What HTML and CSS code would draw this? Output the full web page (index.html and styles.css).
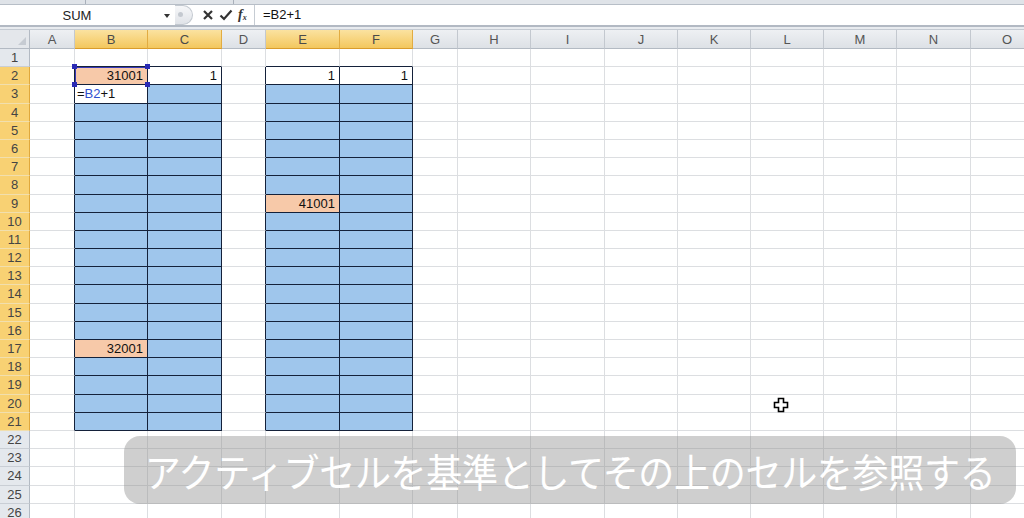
FILE: index.html
```html
<!DOCTYPE html>
<html lang="ja">
<head>
<meta charset="utf-8">
<title>Excel</title>
<link rel="stylesheet" href="styles.css">
</head>
<body>
<div class="app">
  <div class="topstrip"><span class="tdiv d1"></span><span class="tdiv d2"></span></div>
  <div class="fbar">
    <div class="namebox"><span class="name">SUM</span><span class="dd"></span></div>
    <div class="fbtns">
      <span class="cap"><span class="capdot"></span></span>
      <svg class="ico" width="12" height="12" viewBox="0 0 12 12"><path d="M2 2 L10 10 M10 2 L2 10" stroke="#333" stroke-width="2.2" fill="none"/></svg>
      <svg class="ico" width="14" height="12" viewBox="0 0 14 12"><path d="M1.5 6.5 L5 10 L12.5 1.5" stroke="#333" stroke-width="2.2" fill="none"/></svg>
      <span class="fx">f<sub>x</sub></span>
    </div>
    <div class="finput">=B2+1</div>
  </div>
  <div class="fsep"></div>
  <div class="sheet" id="sheet"></div>
  <div class="subtitle"><span class="subtext">アクティブセルを基準としてその上のセルを参照する</span></div>
  <svg class="cursor" width="16" height="16" viewBox="0 0 16 16"><path d="M5.5 1.5 H10.5 V5.5 H14.5 V10.5 H10.5 V14.5 H5.5 V10.5 H1.5 V5.5 H5.5 Z" fill="#fff" stroke="#000" stroke-width="1.6"/></svg>
</div>
<script src="script.js"></script>
</body>
</html>
```
FILE: styles.css
```css
html, body { margin: 0; padding: 0; }
body { width: 1024px; height: 518px; overflow: hidden; background: #fff; font-family: "Liberation Sans", "Noto Sans CJK JP", sans-serif; }
.app { position: relative; width: 1024px; height: 518px; overflow: hidden; }
.topstrip { position: relative; height: 5px; background: #dfe3e8; border-bottom: 1px solid #b7bec7; box-sizing: border-box; }
.tdiv { position: absolute; top: 0; width: 1px; height: 4px; background: #a9b0ba; }
.d1 { left: 85px; }
.d2 { left: 233px; }
.fbar { display: flex; height: 20px; background: #fff; align-items: stretch; }
.namebox { width: 174px; display: flex; align-items: center; position: relative; }
.name { width: 154px; text-align: center; font-size: 13px; color: #222; }
.dd { position: absolute; left: 164px; top: 9px; width: 0; height: 0; border-left: 3px solid transparent; border-right: 3px solid transparent; border-top: 4px solid #333; }
.fbtns { width: 80px; display: flex; align-items: center; gap: 5px; border-right: 1px solid #c6ccd3; }
.cap { width: 17px; height: 18px; border: 1px solid #c3c9d0; border-left: none; border-radius: 0 11px 11px 0; margin-left: 1px; margin-right: 4px; position: relative; background: linear-gradient(#f6f7f9, #e0e3e8); }
.capdot { position: absolute; left: 3px; top: 6px; width: 5px; height: 5px; border-radius: 50%; background: #c4c9d0; }
.ico { display: block; }
.fx { font-family: "Liberation Serif", serif; font-style: italic; font-weight: bold; font-size: 14px; color: #333; line-height: 1; }
.fx sub { font-size: 8px; vertical-align: -1px; }
.finput { flex: 1; padding-left: 8px; font-size: 13px; line-height: 20px; color: #111; }
.fsep { height: 5px; border-top: 2px solid #b2b9c3; border-bottom: 1px solid #c4cad2; box-sizing: border-box; background: #e8ebef; }
.sheet { display: grid; grid-template-columns: 30px 45px 73px 74px 44px 74px 73px 45px 73px 74px 73px 73px 73px 73px 74px 73px; grid-template-rows: 19px repeat(26, 18.2px); }
.sheet > div { box-sizing: border-box; border-right: 1px solid #dcdee1; border-bottom: 1px solid #dcdee1; font-size: 13px; color: #111; line-height: 17px; white-space: nowrap; overflow: hidden; }
.sheet > .ch { background: linear-gradient(#eef0f3, #dde1e6); border-right: 1px solid #c3c8cf; border-bottom: 1px solid #b3bac3; text-align: center; font-size: 13px; line-height: 19px; color: #555; }
.sheet > .ch.on { background: linear-gradient(#fbe2a0, #f3c75e); border-right: 1px solid #e2ac42; border-bottom: 1px solid #d99c2c; color: #4a4a4a; }
.sheet > .corner { position: relative; background: #e4e7eb; border-right: 1px solid #b3bac3; border-bottom: 1px solid #b3bac3; }
.corner::after { content: ""; position: absolute; right: 3px; bottom: 3px; width: 0; height: 0; border-left: 8px solid transparent; border-bottom: 8px solid #c6cbd2; }
.sheet > .rh { background: #e4e8ed; border-right: 1px solid #b3bac3; border-bottom: 1px solid #c9ced5; text-align: center; font-size: 13px; line-height: 18px; color: #444; }
.sheet > .rh.on { background: #f8d173; border-right: 1px solid #e0a83c; border-bottom: 1px solid #f1dfae; }
.sheet > .blue { background: #9fc6ec; }
.sheet > .peach { background: #f7c9a9; }
.sheet > .white { background: #fff; }
.sheet > .num { text-align: right; padding-right: 4px; }
.sheet > .edit { padding-left: 2px; }
.ref { color: #2f4fcf; }
.sheet > .dr { border-right-color: #14213a; }
.sheet > .db { border-bottom-color: #14213a; }
.sheet > .sel { position: relative; overflow: visible; box-shadow: inset 0 1px 0 #3a3ab8, inset 1px 0 0 #3a3ab8; }
.hd { position: absolute; width: 5px; height: 5px; background: #2a2ab4; }
.h1 { left: -3px; top: -3px; }
.h2 { right: -3px; top: -3px; }
.h3 { left: -3px; bottom: -3px; }
.h4 { right: -3px; bottom: -3px; }
.subtitle { position: absolute; left: 124px; top: 436px; width: 892px; height: 68px; border-radius: 16px; background: rgba(140, 140, 140, 0.42); display: flex; align-items: center; justify-content: center; }
.subtext { display: block; color: #fff; font-family: "Noto Sans CJK JP", sans-serif; font-size: 36px; line-height: 1; letter-spacing: -0.3px; white-space: nowrap; transform: scaleY(1.08); }
.cursor { position: absolute; left: 773px; top: 397px; }
```
FILE: script.js
```js
(function () {
  var sheet = document.getElementById('sheet');
  var letters = ['', 'A', 'B', 'C', 'D', 'E', 'F', 'G', 'H', 'I', 'J', 'K', 'L', 'M', 'N', 'O'];
  var selCols = { 2: 1, 3: 1, 5: 1, 6: 1 };
  function inTable(r, c) { return r >= 2 && r <= 21 && selCols[c] === 1; }
  var special = {
    '2,2': { cls: 'peach num sel', text: '31001' },
    '2,3': { cls: 'white num', text: '1' },
    '2,5': { cls: 'white num', text: '1' },
    '2,6': { cls: 'white num', text: '1' },
    '3,2': { cls: 'white edit', html: '=<span class="ref">B2</span>+1' },
    '17,2': { cls: 'peach num', text: '32001' },
    '9,5': { cls: 'peach num', text: '41001' }
  };
  function add(cls, text) {
    var d = document.createElement('div');
    d.className = cls;
    if (text) d.textContent = text;
    sheet.appendChild(d);
    return d;
  }
  add('corner');
  for (var c = 1; c < letters.length; c++) {
    add('ch' + (selCols[c] ? ' on' : ''), letters[c]);
  }
  for (var r = 1; r <= 26; r++) {
    add('rh' + (r >= 2 && r <= 21 ? ' on' : ''), String(r));
    for (var c2 = 1; c2 < letters.length; c2++) {
      var cls = 'cell';
      var sp = special[r + ',' + c2];
      if (sp) cls += ' ' + sp.cls;
      else if (inTable(r, c2)) cls += ' blue';
      if (inTable(r, c2) || inTable(r, c2 + 1)) cls += ' dr';
      if (inTable(r, c2) || inTable(r + 1, c2)) cls += ' db';
      var d = add(cls, sp && sp.text ? sp.text : '');
      if (sp && sp.html) d.innerHTML = sp.html;
      if (sp && sp.cls.indexOf('sel') >= 0) {
        ['h1', 'h2', 'h3', 'h4'].forEach(function (h) {
          var s = document.createElement('span');
          s.className = 'hd ' + h;
          d.appendChild(s);
        });
      }
    }
  }
})();
```
